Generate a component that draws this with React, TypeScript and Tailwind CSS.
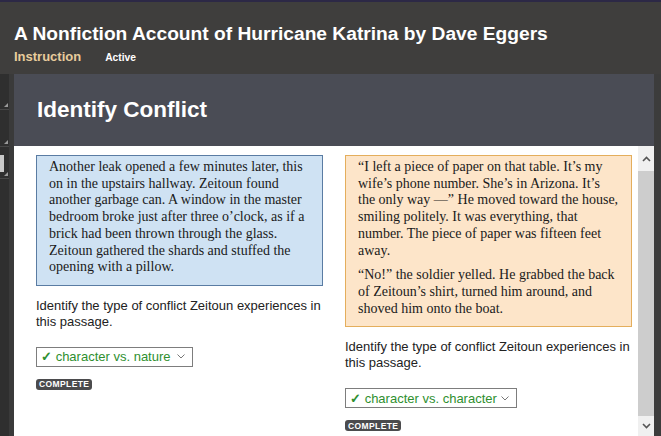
const passageLeft = [
  [
    "Another leak opened a few minutes later, this",
    "on in the upstairs hallway. Zeitoun found",
    "another garbage can. A window in the master",
    "bedroom broke just after three o’clock, as if a",
    "brick had been thrown through the glass.",
    "Zeitoun gathered the shards and stuffed the",
    "opening with a pillow.",
  ],
];

const passageRight = [
  [
    "“I left a piece of paper on that table. It’s my",
    "wife’s phone number. She’s in Arizona. It’s",
    "the only way —” He moved toward the house,",
    "smiling politely. It was everything, that",
    "number. The piece of paper was fifteen feet",
    "away.",
  ],
  [
    "“No!” the soldier yelled. He grabbed the back",
    "of Zeitoun’s shirt, turned him around, and",
    "shoved him onto the boat.",
  ],
];

function Corner() {
  return (
    <svg width="4" height="4" viewBox="0 0 4 4" className="absolute right-[1px] bottom-[2px]">
      <polygon points="4,0 4,4 0,4" fill="#9a9a9a" />
    </svg>
  );
}

function Chevron({ up }: { up?: boolean }) {
  return (
    <svg width="9" height="6" viewBox="0 0 9 6">
      <path d={up ? "M1 5 L4.5 1.5 L8 5" : "M1 1 L4.5 4.5 L8 1"} fill="none" stroke="#555" strokeWidth="1.6" />
    </svg>
  );
}

function Passage({ paras, tone }: { paras: string[][]; tone: "blue" | "orange" }) {
  const box =
    tone === "blue"
      ? "bg-[#cfe2f3] border-[#5a7ca3]"
      : "bg-[#fde5c9] border-[#e4ae5c]";
  return (
    <div className={`border ${box} pl-[12px] pr-[4px] pt-[3px] pb-[9px] flex flex-col gap-[8px]`}>
      {paras.map((lines, i) => (
        <p
          key={i}
          className="text-[14px] leading-[16.7px] text-[#1a1a1a] whitespace-nowrap"
          style={{ fontFamily: "'Liberation Serif', serif" }}
        >
          {lines.map((l, j) => (
            <span key={j}>
              {l}
              {j < lines.length - 1 && <br />}
            </span>
          ))}
        </p>
      ))}
    </div>
  );
}

function Question({ answer, width }: { answer: string; width: string }) {
  return (
    <div className="flex flex-col items-start">
      <p className="mt-[12px] text-[13px] leading-[16px] text-[#222] font-['Liberation_Sans',Arial,sans-serif]">
        Identify the type of conflict Zeitoun experiences in this passage.
      </p>
      <div
        className={`mt-[17px] h-[20px] ${width} border border-[#7d7d7d] bg-white flex items-center justify-between pl-[4px] pr-[7px] text-[13px] text-[#2f8f2f] font-['Liberation_Sans',Arial,sans-serif]`}
      >
        <span>
          <span className="font-bold">✓</span> {answer}
        </span>
        <svg width="8" height="5" viewBox="0 0 8 5">
          <path d="M0.5 0.5 L4 4 L7.5 0.5" fill="none" stroke="#777" strokeWidth="1" />
        </svg>
      </div>
      <span className="mt-[12px] h-[11px] rounded-[3px] bg-[#4b4b4d] px-[3px] flex items-center text-[8.5px] leading-none font-bold tracking-[0.4px] text-white font-['Liberation_Sans',Arial,sans-serif]">
        COMPLETE
      </span>
    </div>
  );
}

export default function App() {
  return (
    <div className="w-[661px] h-[436px] overflow-hidden bg-[#3f3e3d] flex flex-col font-['Liberation_Sans',Arial,sans-serif]">
      <div className="h-[2px] bg-[#2c2846]" />
      <div className="h-[72px] px-[14px] pt-[20px]">
        <h1 className="text-[19.2px] leading-[24px] font-bold text-white">
          A Nonfiction Account of Hurricane Katrina by Dave Eggers
        </h1>
        <div className="flex items-baseline mt-[1px]">
          <span className="text-[13px] font-bold text-[#e8cc9c]">Instruction</span>
          <span className="ml-[24px] text-[10.3px] font-bold text-white">Active</span>
        </div>
      </div>
      <div className="flex flex-1">
        <div className="w-[14px] flex">
          <div className="w-[9px] bg-[#2f2f2f] flex flex-col">
            <div className="relative h-[36px] border-b border-[#484848]">
              <Corner />
            </div>
            <div className="relative h-[37px] border-b border-[#484848]">
              <Corner />
            </div>
            <div className="relative h-[32px] border-b border-[#484848] pt-[8px]">
              <div className="w-[4px] h-[17px] bg-[#c9c9c9]" />
              <Corner />
            </div>
          </div>
          <div className="w-[5px] bg-[#3a3a3a]" />
        </div>
        <div className="w-[640px] flex flex-col">
          <div className="h-[72px] bg-[#4a4c55] flex items-center pl-[23px] pb-[1px]">
            <h2 className="text-[22.5px] font-bold text-white">Identify Conflict</h2>
          </div>
          <div className="flex-1 flex bg-white">
            <div className="flex-1 flex gap-[22px] pl-[22px] pt-[9px]">
              <div className="w-[287px]">
                <Passage paras={passageLeft} tone="blue" />
                <Question answer="character vs. nature" width="w-[157px]" />
              </div>
              <div className="w-[287px]">
                <Passage paras={passageRight} tone="orange" />
                <Question answer="character vs. character" width="w-[172px]" />
              </div>
            </div>
            <div className="w-[16px] bg-[#f0f0f0] flex flex-col">
              <div className="h-[25px] flex items-center justify-center">
                <Chevron up />
              </div>
              <div className="flex-1 bg-[#cdcdcd]" />
              <div className="h-[20px] flex items-center justify-center">
                <Chevron />
              </div>
            </div>
          </div>
        </div>
        <div className="flex-1 bg-[#3c3c3c]" />
      </div>
    </div>
  );
}
